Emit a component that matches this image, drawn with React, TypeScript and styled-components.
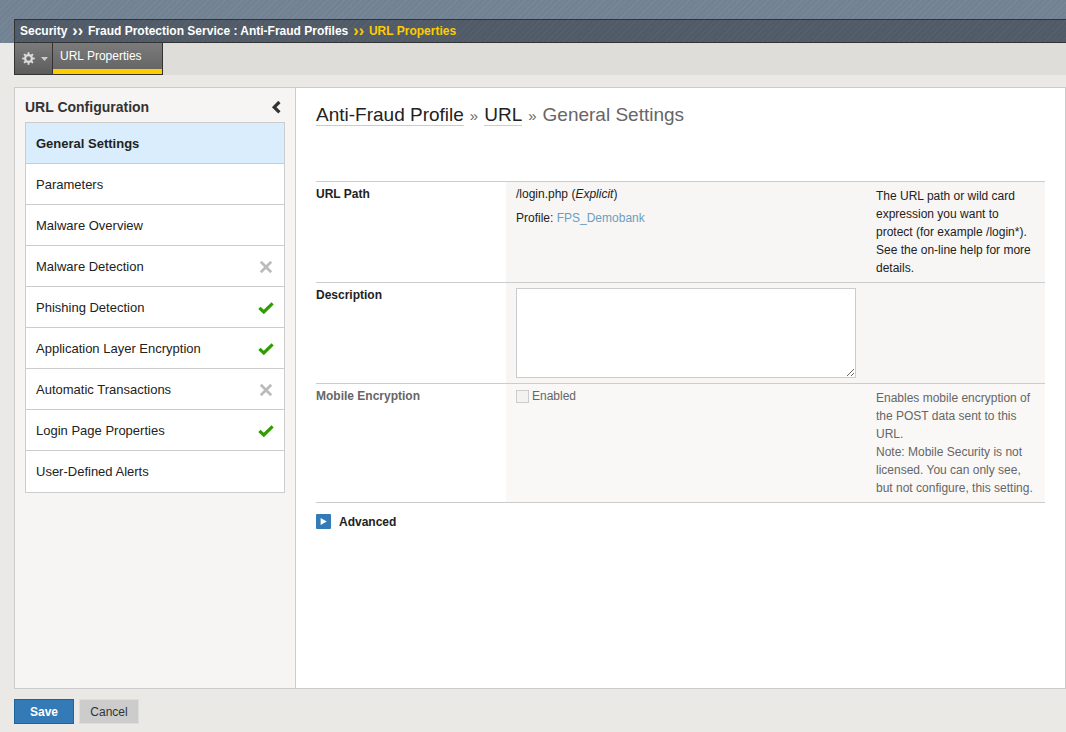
import React from "react";
import styled, { createGlobalStyle } from "styled-components";

const GlobalStyle = createGlobalStyle`
  * { box-sizing: border-box; }
  body {
    margin: 0;
    background: #eae9e5;
    color: #222;
    font: 12px/14px "Liberation Sans", Arial, sans-serif;
  }
  button, textarea, input { font: inherit; }
`;

const Page = styled.div`
  display: flex;
  flex-direction: column;
  min-height: 100vh;
`;

const stripes = (base: string, line: string) =>
  `repeating-linear-gradient(135deg, ${base} 0 3px, ${line} 3px 4px)`;

const Banner = styled.header`
  padding: 19px 0 0 14px;
  background: ${stripes("#728292", "#788898")};
`;

const CrumbBar = styled.nav`
  display: flex;
  align-items: center;
  gap: 5px;
  height: 24px;
  padding: 0 5px;
  border: 1px solid #333;
  border-right: 0;
  background: ${stripes("#505b67", "#55606c")};
  color: #fff;
  font-weight: bold;
  white-space: nowrap;
`;

const Crumb = styled.a`
  color: inherit;
  text-decoration: none;
`;

const CrumbMark = styled.span`
  font-size: 16px;
`;

const CurrentCrumb = styled.span`
  display: flex;
  gap: 5px;
  color: #fc0;
`;

const TabStrip = styled.div`
  display: flex;
  height: 32px;
  margin-left: 14px;
  background: #deddd9;
`;

const GearButton = styled.button`
  display: flex;
  align-items: center;
  gap: 6px;
  width: 39px;
  padding: 0 0 0 7px;
  border: 1px solid #333;
  border-top: 0;
  background: linear-gradient(#7b7b7b, #5c5c5c);
`;

const Tab = styled.a`
  width: 110px;
  padding: 6px 0 0 7px;
  border: 1px solid #333;
  border-width: 0 1px 1px 0;
  background: linear-gradient(#7b7b7b, #626262);
  box-shadow: inset 0 -5px #fc0;
  color: #fff;
  text-decoration: none;
`;

const Panel = styled.div`
  display: flex;
  flex: 1;
  margin: 12px 0 0 14px;
  border: 1px solid #ccc;
  background: #fff;
`;

const Sidebar = styled.aside`
  flex: none;
  width: 281px;
  padding: 10px;
  border-right: 1px solid #ccc;
  background: #f6f5f4;
`;

const SidebarHead = styled.div`
  display: flex;
  align-items: center;
  justify-content: space-between;
  height: 18px;
  margin-bottom: 6px;
`;

const SidebarTitle = styled.h2`
  margin: 0;
  font-size: 14px;
  line-height: 18px;
  color: #333;
`;

const CollapseButton = styled.button`
  display: flex;
  padding: 0 4px;
  border: 0;
  background: none;
`;

const Menu = styled.ul`
  margin: 0;
  padding: 0 0 1px;
  border: 1px solid #ccc;
  background: #fff;
  list-style: none;
`;

const MenuItem = styled.li`
  & + & { border-top: 1px solid #ccc; }
`;

const MenuLink = styled.a<{ $active?: boolean }>`
  display: flex;
  align-items: center;
  justify-content: space-between;
  height: 40px;
  padding: 2px 10px 0;
  background: ${(p) => (p.$active ? "#daedfc" : "#fff")};
  color: #222;
  font-size: 13px;
  font-weight: ${(p) => (p.$active ? "bold" : "normal")};
  text-decoration: none;
`;

const Main = styled.main`
  flex: 1;
  min-width: 0;
  padding: 14px 20px;
`;

const Title = styled.h1`
  display: flex;
  align-items: baseline;
  gap: 6px;
  margin: 0 0 52px;
  color: #666;
  font-size: 19px;
  font-weight: normal;
  line-height: 26px;
`;

const TitleLink = styled.a`
  border-bottom: 1px solid #ccc;
  color: #222;
  line-height: 20px;
  text-decoration: none;
`;

const TitleMark = styled.span`
  font-size: 15px;
`;

const Settings = styled.table`
  width: 100%;
  table-layout: fixed;
  border-spacing: 0;
  border-bottom: 1px solid #ccc;
`;

const LabelCell = styled.th`
  width: 190px;
  padding: 5px 0;
  border-top: 1px solid #ccc;
  text-align: left;
  vertical-align: top;
`;

const ValueCell = styled.td`
  padding: 5px 10px;
  border-top: 1px solid #ccc;
  background: #f7f6f5;
  vertical-align: top;
`;

const HelpCell = styled(ValueCell)`
  width: 179px;
  line-height: 18px;
`;

const SettingRow = styled.tr<{ $disabled?: boolean }>`
  color: ${(p) => (p.$disabled ? "#666" : "#222")};

  ${ValueCell} {
    background: ${(p) => (p.$disabled ? "#f9f8f7" : "#f7f6f5")};
  }
`;

const ProfileLine = styled.div`
  margin-top: 10px;
`;

const ProfileLink = styled.a`
  color: #6a9fc0;
  text-decoration: none;
`;

const DescriptionBox = styled.textarea`
  display: block;
  width: 100%;
  height: 90px;
  border: 1px solid #ccc;
  background: #fff;
  outline: 0;
`;

const CheckLabel = styled.label`
  display: flex;
  align-items: flex-start;
  gap: 3px;
`;

const CheckBox = styled.input`
  appearance: none;
  width: 13px;
  height: 13px;
  margin: 1px 0 0;
  border: 1px solid #ccc;
  background: #f2f2f2;
`;

const AdvancedButton = styled.button`
  display: flex;
  align-items: center;
  gap: 8px;
  margin-top: 11px;
  padding: 0;
  border: 0;
  background: none;
  color: #222;
  font-weight: bold;
`;

const Footer = styled.footer`
  display: flex;
  gap: 5px;
  padding: 10px 0 8px 14px;
`;

const Button = styled.button<{ $primary?: boolean }>`
  width: 60px;
  height: 25px;
  padding: 0;
  border: 1px solid ${(p) => (p.$primary ? "#1c659c" : "#ddd")};
  background: ${(p) => (p.$primary ? "#337ab7" : "#ccc")};
  color: ${(p) => (p.$primary ? "#fff" : "#333")};
  font-weight: ${(p) => (p.$primary ? "bold" : "normal")};
`;

const GearIcon = () => (
  <svg width="13" height="13" viewBox="0 0 13 13" aria-hidden="true">
    <circle cx="6.5" cy="6.5" r="3.4" fill="none" stroke="#ddd" strokeWidth="2.2" />
    <g stroke="#ddd" strokeWidth="1.8">
      {[0, 45, 90, 135, 180, 225, 270, 315].map((a) => (
        <path key={a} d="M6.5 0.2V2.6" transform={`rotate(${a} 6.5 6.5)`} />
      ))}
    </g>
  </svg>
);

const CaretIcon = () => (
  <svg width="7" height="4" viewBox="0 0 7 4" aria-hidden="true">
    <path d="M0 0H7L3.5 4Z" fill="#ccc" />
  </svg>
);

const ChevronIcon = () => (
  <svg width="10" height="14" viewBox="0 0 10 14" aria-hidden="true">
    <path d="M8.4 2 3.2 7.2 8.4 12.4" fill="none" stroke="#333" strokeWidth="3.2" />
  </svg>
);

const CheckIcon = () => (
  <svg width="16" height="12" viewBox="0 0 16 12" role="img" aria-label="On">
    <path d="M1.4 5.8 5.8 10 14.6 1.4" fill="none" stroke="#2e9e00" strokeWidth="3.2" />
  </svg>
);

const CrossIcon = () => (
  <svg width="16" height="12" viewBox="0 0 16 12" role="img" aria-label="Off">
    <path d="M2.8 0.8 13.2 11.2M13.2 0.8 2.8 11.2" fill="none" stroke="#bbb" strokeWidth="2.8" />
  </svg>
);

const ExpandIcon = () => (
  <svg width="15" height="15" viewBox="0 0 15 15" aria-hidden="true">
    <rect width="15" height="15" rx="1" fill="#337ab7" />
    <path d="M4.6 4V11L10.8 7.5Z" fill="#fff" />
  </svg>
);

const sections: { name: string; status?: "on" | "off" }[] = [
  { name: "General Settings" },
  { name: "Parameters" },
  { name: "Malware Overview" },
  { name: "Malware Detection", status: "off" },
  { name: "Phishing Detection", status: "on" },
  { name: "Application Layer Encryption", status: "on" },
  { name: "Automatic Transactions", status: "off" },
  { name: "Login Page Properties", status: "on" },
  { name: "User-Defined Alerts" },
];

export default function App() {
  return (
    <Page>
      <GlobalStyle />
      <Banner>
        <CrumbBar aria-label="Breadcrumb">
          <Crumb href="#security">Security</Crumb>
          <CrumbMark>››</CrumbMark>
          <Crumb href="#profiles">Fraud Protection Service : Anti-Fraud Profiles</Crumb>
          <CurrentCrumb>
            <CrumbMark>››</CrumbMark>
            <span>URL Properties</span>
          </CurrentCrumb>
        </CrumbBar>
      </Banner>
      <TabStrip>
        <GearButton type="button" aria-label="Options">
          <GearIcon />
          <CaretIcon />
        </GearButton>
        <Tab href="#url-properties">URL Properties</Tab>
      </TabStrip>
      <Panel>
        <Sidebar>
          <SidebarHead>
            <SidebarTitle>URL Configuration</SidebarTitle>
            <CollapseButton type="button" aria-label="Collapse">
              <ChevronIcon />
            </CollapseButton>
          </SidebarHead>
          <Menu>
            {sections.map((s, i) => (
              <MenuItem key={s.name}>
                <MenuLink href={`#section-${i}`} $active={i === 0}>
                  {s.name}
                  {s.status === "on" && <CheckIcon />}
                  {s.status === "off" && <CrossIcon />}
                </MenuLink>
              </MenuItem>
            ))}
          </Menu>
        </Sidebar>
        <Main>
          <Title>
            <TitleLink href="#profile">Anti-Fraud Profile</TitleLink>
            <TitleMark>»</TitleMark>
            <TitleLink href="#url">URL</TitleLink>
            <TitleMark>»</TitleMark>
            <span>General Settings</span>
          </Title>
          <Settings>
            <tbody>
              <SettingRow>
                <LabelCell scope="row">URL Path</LabelCell>
                <ValueCell>
                  /login.php (<em>Explicit</em>)
                  <ProfileLine>
                    Profile: <ProfileLink href="#fps">FPS_Demobank</ProfileLink>
                  </ProfileLine>
                </ValueCell>
                <HelpCell>
                  The URL path or wild card expression you want to protect (for example /login*). See the
                  on-line help for more details.
                </HelpCell>
              </SettingRow>
              <SettingRow>
                <LabelCell scope="row">
                  <label htmlFor="description">Description</label>
                </LabelCell>
                <ValueCell>
                  <DescriptionBox id="description" />
                </ValueCell>
                <HelpCell />
              </SettingRow>
              <SettingRow $disabled>
                <LabelCell scope="row">Mobile Encryption</LabelCell>
                <ValueCell>
                  <CheckLabel>
                    <CheckBox type="checkbox" disabled />
                    Enabled
                  </CheckLabel>
                </ValueCell>
                <HelpCell>
                  Enables mobile encryption of the POST data sent to this URL.
                  <br />
                  Note: Mobile Security is not licensed. You can only see, but not configure, this setting.
                </HelpCell>
              </SettingRow>
            </tbody>
          </Settings>
          <AdvancedButton type="button" aria-expanded="false">
            <ExpandIcon />
            Advanced
          </AdvancedButton>
        </Main>
      </Panel>
      <Footer>
        <Button type="submit" $primary>
          Save
        </Button>
        <Button type="button">Cancel</Button>
      </Footer>
    </Page>
  );
}
